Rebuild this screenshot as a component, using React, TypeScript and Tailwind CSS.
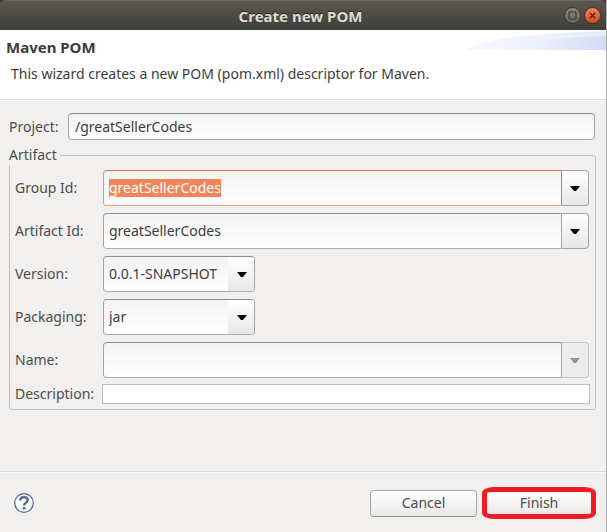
import { useEffect, useRef, useState } from 'react';
import type { ReactNode, Ref } from 'react';

const fieldSkin =
  'border border-t-[#8f8f8f] border-l-[#a3a3a3] border-r-[#a3a3a3] border-b-[#adadad] bg-linear-to-b from-[#f3f3f3] to-white text-[#3c3c3c] outline-none';

function Arrow({ disabled = false }: { disabled?: boolean }) {
  return (
    <svg width="10" height="5" viewBox="0 0 10 5" aria-hidden="true">
      <path d="M0 0h10L6 5H4z" fill={disabled ? '#969490' : '#000'} />
    </svg>
  );
}

function Label({ htmlFor, children }: { htmlFor: string; children: ReactNode }) {
  return (
    <label htmlFor={htmlFor} className="whitespace-nowrap text-[#4c4c4c]">
      {children}
    </label>
  );
}

type ComboProps = {
  id: string;
  initial?: string;
  active?: boolean;
  disabled?: boolean;
  inputRef?: Ref<HTMLInputElement>;
};

function Combo({ id, initial = '', active = false, disabled = false, inputRef }: ComboProps) {
  const [value, setValue] = useState(initial);
  return (
    <div className="flex h-9">
      <input
        id={id}
        ref={inputRef}
        value={value}
        onChange={(e) => setValue(e.target.value)}
        className={`min-w-0 flex-1 rounded-l-[4px] px-[5px] selection:bg-[#f28558] selection:text-white ${
          active
            ? 'border border-t-[#dd7450] border-r-[#dd7450] border-b-[#eba084] border-l-[#e8916f] bg-linear-to-b from-[#f3f3f3] to-white text-[#3c3c3c] outline-none'
            : fieldSkin
        }`}
      />
      <button
        type="button"
        aria-label="Show suggestions"
        disabled={disabled}
        className={`flex w-[27px] items-center justify-center rounded-r-[4px] border border-l-0 ${
          disabled
            ? 'border-[#c4c4c4] bg-[#ededed]'
            : 'border-[#a3a3a3] bg-linear-to-b from-white to-[#e8e7e5]'
        }`}
      >
        <Arrow disabled={disabled} />
      </button>
    </div>
  );
}

function Choice({ id, options }: { id: string; options: string[] }) {
  return (
    <div className="relative h-9 w-[152px]">
      <select id={id} className={`h-full w-full appearance-none rounded-[4px] pr-7 pl-[5px] ${fieldSkin}`}>
        {options.map((o) => (
          <option key={o}>{o}</option>
        ))}
      </select>
      <span className="pointer-events-none absolute inset-y-px right-px flex w-[26px] items-center justify-center rounded-r-[3px] bg-linear-to-b from-white to-[#e8e7e5] pl-[2px]">
        <Arrow />
      </span>
    </div>
  );
}

function TitleBar() {
  return (
    <header className="flex h-[30px] items-center rounded-t-[6px] border-t border-[#6b6961] bg-linear-to-b from-[#5a574f] to-[#3f3e39] pr-[5px] pl-[37px]">
      <h1 className="flex-1 text-center text-[15px] font-bold text-[#dfdbd2] [text-shadow:0_-1px_0_#2b2a27]">
        Create new POM
      </h1>
      <div className="flex gap-[3px]">
        <button type="button" aria-label="Maximize" className="block size-[17px]">
          <svg viewBox="0 0 17 17" className="size-full">
            <defs>
              <linearGradient id="max" x2="0" y2="1">
                <stop stopColor="#8a8880" />
                <stop offset="1" stopColor="#65635c" />
              </linearGradient>
            </defs>
            <circle cx="8.5" cy="8.5" r="8" fill="url(#max)" stroke="#33322e" />
            <path d="M5 5h7v7H5z" fill="none" stroke="#33322e" />
          </svg>
        </button>
        <button type="button" aria-label="Close" className="block size-[17px]">
          <svg viewBox="0 0 17 17" className="size-full">
            <defs>
              <linearGradient id="close" x2="0" y2="1">
                <stop stopColor="#f5835c" />
                <stop offset="1" stopColor="#dd4814" />
              </linearGradient>
            </defs>
            <circle cx="8.5" cy="8.5" r="8" fill="url(#close)" stroke="#33322e" />
            <path d="M5.8 5.8l5.4 5.4M11.2 5.8l-5.4 5.4" stroke="#3b2a22" strokeWidth="1.4" />
          </svg>
        </button>
      </div>
    </header>
  );
}

function Banner() {
  return (
    <section className="relative h-[70px] border-b border-[#d8dada] bg-white">
      <svg width="140" height="20" viewBox="0 0 140 20" className="absolute top-0 right-0" aria-hidden="true">
        <defs>
          <linearGradient id="swoosh">
            <stop stopColor="#f7f9fe" />
            <stop offset="0.5" stopColor="#eaeffb" />
            <stop offset="1" stopColor="#d2dcf5" />
          </linearGradient>
          <linearGradient id="swooshTop">
            <stop stopColor="#f6f8fd" />
            <stop offset="1" stopColor="#e6ecfa" />
          </linearGradient>
        </defs>
        <path d="M0 20C18 8 70 3 140 1V20z" fill="url(#swooshTop)" />
        <path d="M14 20C45 12 85 8 140 6V20z" fill="url(#swoosh)" />
      </svg>
      <h2 className="relative pt-[7px] pl-[6px] text-[15px] leading-5 font-bold text-[#3c3c3c]">Maven POM</h2>
      <p className="relative pt-[7px] pl-[11px] leading-5 whitespace-nowrap text-[#3c3c3c]">
        This wizard creates a new POM (pom.xml) descriptor for Maven.
      </p>
    </section>
  );
}

export default function App() {
  const groupRef = useRef<HTMLInputElement>(null);
  const [project, setProject] = useState('/greatSellerCodes');

  useEffect(() => {
    groupRef.current?.focus();
    groupRef.current?.select();
  }, []);

  return (
    <div className="min-h-screen bg-[#a9adad] pr-px font-['Noto_Sans','Open_Sans',sans-serif] text-[14px] leading-[18px]">
      <form
        onSubmit={(e) => e.preventDefault()}
        className="flex min-h-screen flex-col bg-[linear-gradient(#3c3a36_30px,#f1f0ee_30px)]"
      >
        <TitleBar />
        <Banner />
        <main className="flex-1 border-t border-white px-[9px] pt-3">
          <div className="flex h-[27px] items-center gap-[6px] pr-[2px]">
            <div className="w-[53px]">
              <Label htmlFor="project">Project:</Label>
            </div>
            <input
              id="project"
              value={project}
              onChange={(e) => setProject(e.target.value)}
              className={`h-full min-w-0 flex-1 rounded-[4px] px-[6px] ${fieldSkin}`}
            />
          </div>
          <fieldset className="mt-[5px] mr-px min-w-0 rounded-[3px] border border-[#c0c0c0] px-[5px] pt-[5px] pb-[5px]">
            <legend className="-ml-[6px] pr-[3px] leading-5 text-[#4c4c4c]">Artifact</legend>
            <div className="grid grid-cols-[88px_minmax(0,1fr)] items-center gap-y-[7px] pr-px">
              <Label htmlFor="group">Group Id:</Label>
              <Combo id="group" initial="greatSellerCodes" active inputRef={groupRef} />
              <Label htmlFor="artifact">Artifact Id:</Label>
              <Combo id="artifact" initial="greatSellerCodes" />
              <Label htmlFor="version">Version:</Label>
              <Choice id="version" options={['0.0.1-SNAPSHOT']} />
              <Label htmlFor="packaging">Packaging:</Label>
              <Choice id="packaging" options={['jar', 'pom', 'war']} />
              <Label htmlFor="name">Name:</Label>
              <Combo id="name" disabled />
            </div>
            <div className="mt-[6px] flex h-5 items-center">
              <div className="w-[87px]">
                <Label htmlFor="description">Description:</Label>
              </div>
              <input
                id="description"
                className="h-full min-w-0 flex-1 border border-[#bfbdba] bg-white px-1 text-[#3c3c3c] outline-none"
              />
            </div>
          </fieldset>
        </main>
        <footer className="flex h-[61px] items-center border-t border-[#dadad8] pt-[2px] pr-[10px] pl-[14px] shadow-[inset_0_1px_0_#fafafa]">
          <button type="button" aria-label="Help" className="mr-auto size-5">
            <svg viewBox="0 0 20 20" className="size-full" fill="none" stroke="#52658c">
              <circle cx="10" cy="10" r="9.3" fill="#f7f8fa" strokeWidth="1.2" />
              <path
                d="M6.3 7.4C6.3 5.2 7.9 4.2 10 4.2s3.8 1.1 3.8 3c0 2.4-3.7 2.6-3.7 5.4"
                strokeWidth="2.3"
              />
              <path d="M8.8 15.2h2.6" strokeWidth="2.4" />
            </svg>
          </button>
          <button
            type="button"
            className="h-[27px] w-[107px] rounded-[4px] border border-[#a6a5a3] border-b-[#8f8e8c] bg-linear-to-b from-white to-[#e9e8e6] text-[#4c4c4c]"
          >
            Cancel
          </button>
          <button
            type="submit"
            className="ml-[5px] h-8 w-[114px] rounded-[12px/6px] border-[5px] border-[#ed1c24] bg-linear-to-b from-white to-[#e9e8e6] text-[#4c4c4c]"
          >
            Finish
          </button>
        </footer>
      </form>
    </div>
  );
}
